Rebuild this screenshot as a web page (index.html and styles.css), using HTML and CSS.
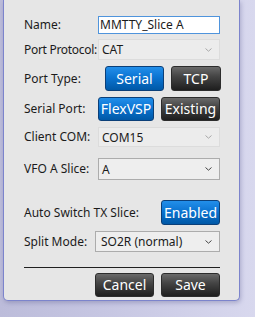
FILE: index.html
```html
<!DOCTYPE html>
<html>
<head>
<meta charset="utf-8">
<link rel="stylesheet" href="styles.css">
</head>
<body>
<div class="panel">
  <div class="row r-name">
    <span class="label">Name:</span>
    <div class="textbox">MMTTY_Slice A</div>
  </div>
  <div class="row r-proto">
    <span class="label tight">Port Protocol:</span>
    <div class="combo disabled"><span>CAT</span><svg class="chev" viewBox="0 0 7 4"><path d="M0.5 0.5 L3.5 3.2 L6.5 0.5"/></svg></div>
  </div>
  <div class="row r-type">
    <span class="label">Port Type:</span>
    <div class="btns btns-type">
      <button class="btn blue w59">Serial</button>
      <button class="btn dark w50">TCP</button>
    </div>
  </div>
  <div class="row r-serial">
    <span class="label">Serial Port:</span>
    <div class="btns">
      <button class="btn blue w56">FlexVSP</button>
      <button class="btn dark w59">Existing</button>
    </div>
  </div>
  <div class="row r-com">
    <span class="label">Client COM:</span>
    <div class="combo disabled"><span>COM15</span><svg class="chev" viewBox="0 0 7 4"><path d="M0.5 0.5 L3.5 3.2 L6.5 0.5"/></svg></div>
  </div>
  <div class="row r-vfo">
    <span class="label">VFO A Slice:</span>
    <div class="combo"><span>A</span><svg class="chev" viewBox="0 0 7 4"><path d="M0.5 0.5 L3.5 3.2 L6.5 0.5"/></svg></div>
  </div>
  <div class="row r-auto">
    <span class="label wide">Auto Switch TX Slice:</span>
    <button class="btn blue w59">Enabled</button>
  </div>
  <div class="row r-split">
    <span class="label short">Split Mode:</span>
    <div class="combo wide-combo"><span>SO2R (normal)</span><svg class="chev" viewBox="0 0 7 4"><path d="M0.5 0.5 L3.5 3.2 L6.5 0.5"/></svg></div>
  </div>
  <div class="sep"></div>
  <div class="row r-actions">
    <button class="btn dark w59">Cancel</button>
    <button class="btn dark w59">Save</button>
  </div>
</div>
</body>
</html>
```
FILE: styles.css
```css
html, body {
  margin: 0;
  padding: 0;
}
body {
  width: 255px;
  height: 317px;
  overflow: hidden;
  background: linear-gradient(90deg, #bcbcda 0%, #c6c6e2 40%, #d8d8ee 100%);
  font-family: "Noto Sans", "Open Sans", sans-serif;
  font-size: 12px;
  color: #1b1b1b;
}
.panel {
  box-sizing: border-box;
  margin-left: 3px;
  width: 237px;
  height: 301px;
  background: #e6e6e6;
  border: 1px solid #7c84cc;
  border-top: none;
  border-radius: 0 0 5px 5px;
  box-shadow: 1px 2px 4px rgba(90, 90, 140, 0.35);
  padding: 16px 18px 0 20px;
  display: flex;
  flex-direction: column;
}
.row {
  display: flex;
  align-items: center;
}
.label {
  width: 74px;
  flex: none;
  white-space: nowrap;
  line-height: 14px;
}
.label.tight { letter-spacing: -0.3px; }
.label.wide { width: 137px; }
.label.short { width: 71px; }
.textbox {
  box-sizing: border-box;
  width: 122px;
  height: 18px;
  border: 1px solid #4f94dc;
  background: #fff;
  padding-left: 1px;
  line-height: 15px;
  white-space: nowrap;
}
.combo {
  box-sizing: border-box;
  width: 122px;
  display: flex;
  align-items: center;
  justify-content: space-between;
  padding: 0 7px 0 3px;
  background: #eeeeee;
  border: 1px solid #acacac;
  height: 22px;
}
.combo.disabled {
  background: #ececec;
  border-color: #dcdcdc;
}
.combo.wide-combo {
  width: 125px;
  padding-left: 5px;
}
.chev {
  width: 7px;
  height: 4px;
  fill: none;
  stroke: #444;
  stroke-width: 1;
}
.combo.disabled .chev { stroke: #a8a8a8; }
.btns {
  display: flex;
  gap: 7px;
}
.btns-type { margin-left: 7px; }
.btn {
  box-sizing: border-box;
  height: 25px;
  border-radius: 3px;
  font-family: "Noto Sans", "Open Sans", sans-serif;
  font-size: 14px;
  color: #fff;
  padding: 0;
  line-height: 20px;
  text-align: center;
}
.btn.blue {
  background: linear-gradient(180deg, #238fea 0%, #0b74d2 45%, #0058a6 100%);
  border: 1px solid #0b3f78;
}
.btn.dark {
  background: linear-gradient(180deg, #6a6a6a 0%, #454545 40%, #1e1e1e 100%);
  border: 1px solid #2c2c2c;
}
.w59 { width: 59px; }
.w50 { width: 50px; }
.w56 { width: 56px; }
.r-name { height: 18px; }
.r-proto { height: 21px; margin-top: 5px; }
.r-proto .combo, .r-com .combo { height: 21px; }
.r-type { height: 25px; margin-top: 6px; }
.r-serial { height: 24px; margin-top: 6px; }
.r-serial .btn { height: 24px; }
.r-com { height: 20px; margin-top: 6px; }
.r-com .combo { height: 20px; }
.r-vfo { height: 22px; margin-top: 11px; }
.r-auto { height: 25px; margin-top: 20px; }
.r-split { height: 21px; margin-top: 6px; }
.r-split .combo { height: 21px; }
.sep {
  margin-top: 15px;
  height: 1px;
  background: #202020;
  width: 196px;
}
.r-actions {
  margin-top: 5px;
  height: 24px;
  padding-left: 71px;
  gap: 7px;
}
.r-actions .btn { height: 24px; }
```
